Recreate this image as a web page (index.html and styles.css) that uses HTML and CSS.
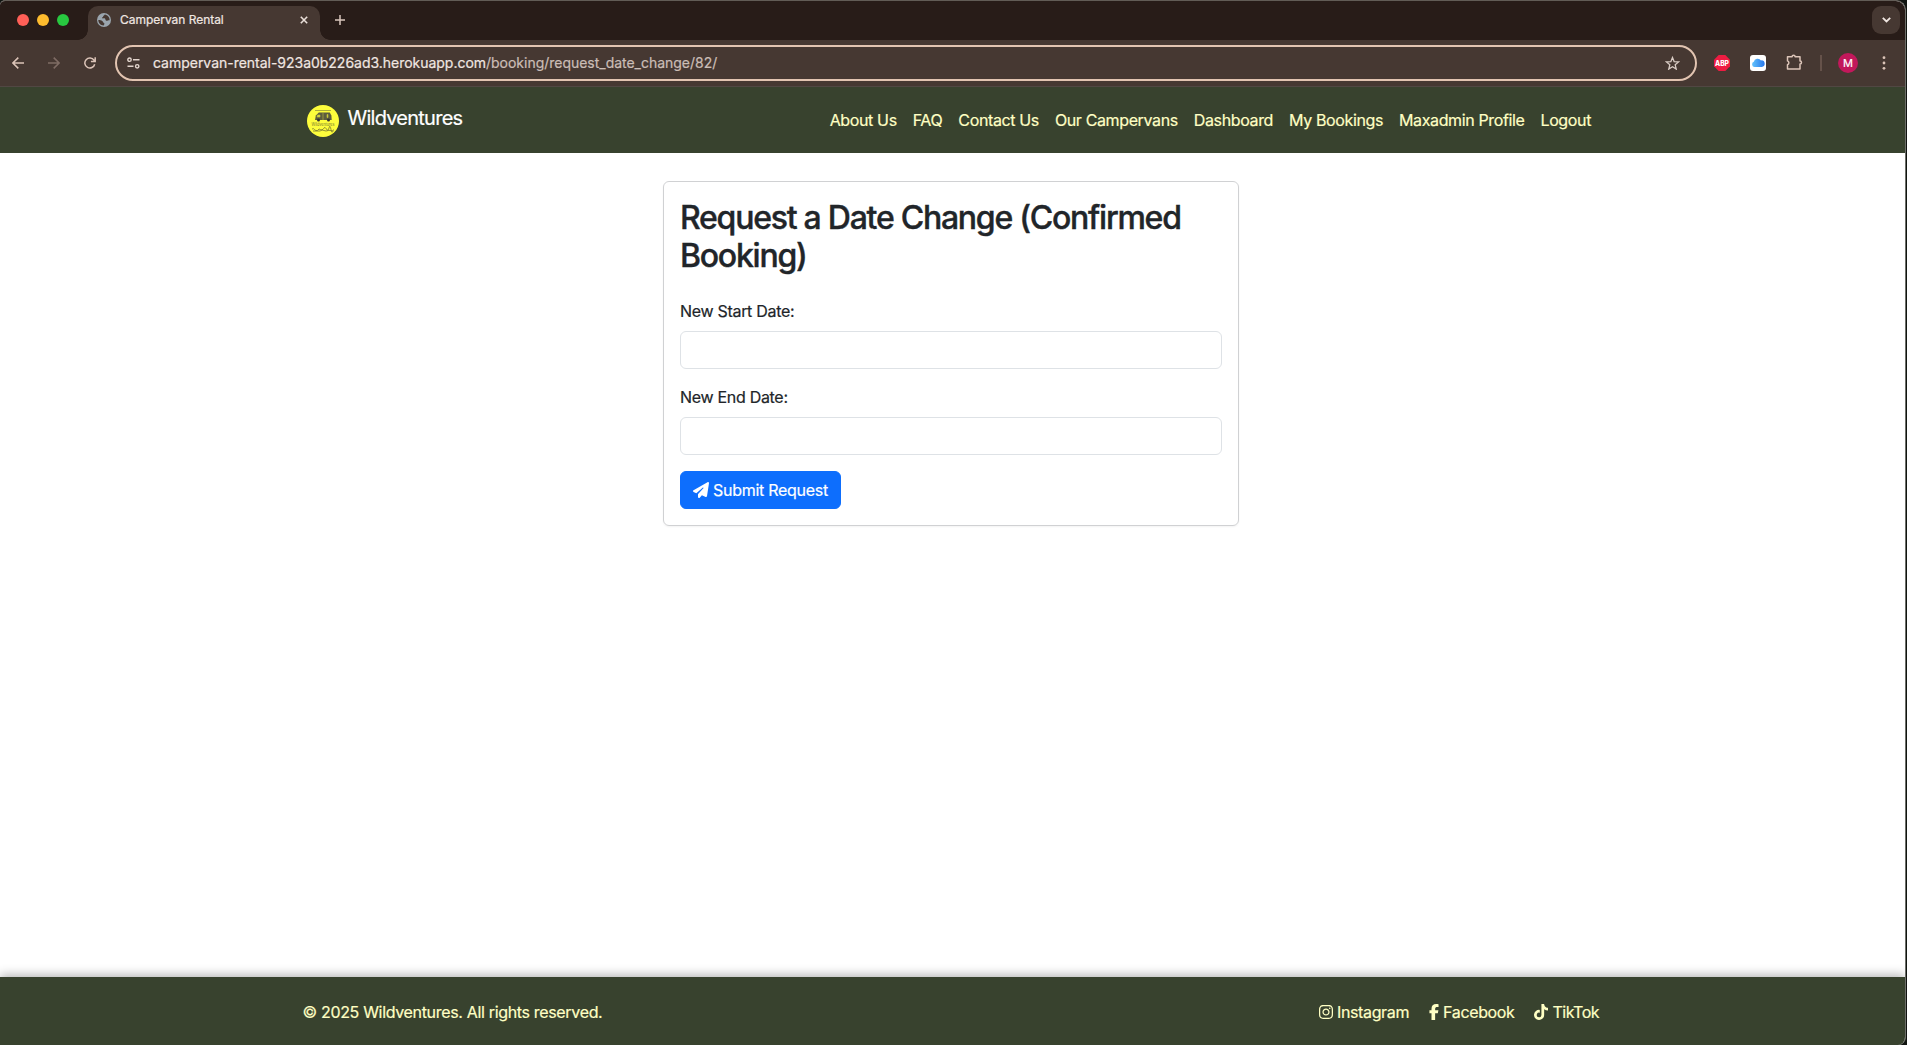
FILE: index.html
```html
<!DOCTYPE html>
<html lang="en">
<head>
<meta charset="utf-8">
<title>Campervan Rental</title>
<link rel="stylesheet" href="styles.css">
</head>
<body>
<div class="window">
  <div class="tab-strip">
    <div class="lights"><i class="red"></i><i class="amber"></i><i class="green"></i></div>
    <div class="tab">
      <svg class="globe" width="14" height="14" viewBox="0 0 14 14"><circle cx="7" cy="7" r="7" fill="#9aa5ae"/><path d="M1.3 7.1c1.7.2 2.9.1 4 .8.9.6.4 1.6 1.5 1.9 1 .3.6 1.9-.2 2.7C3.400 12.500 1.300 10 1.300 7.100zM7.800 1.600c-.3 1.100-1.500.9-1.700 2-.1.900-1 .6-1.100 1.500.8.900 2.100-.3 3 .5.8.8.1 1.900 1.300 2.200 1 .2 1.600-.5 3.300-.5.1-3-1.900-5.300-4.800-5.700z" fill="#463832"/></svg>
      <span class="tab-title">Campervan Rental</span>
      <svg class="tab-close" width="8" height="8" viewBox="0 0 8 8"><path d="M.8.8l6.400 6.400M7.200.8L.8 7.200" stroke="#eadfd9" stroke-width="1.600"/></svg>
    </div>
    <svg class="new-tab" width="10" height="10" viewBox="0 0 10 10"><path d="M5 0v10M0 5h10" stroke="#d9c6bc" stroke-width="1.500"/></svg>
    <div class="tab-search"><svg width="9" height="6" viewBox="0 0 9 6"><path d="M.8.8l3.700 3.700L8.200.8" fill="none" stroke="#f0e6e1" stroke-width="1.800"/></svg></div>
  </div>

  <div class="toolbar">
    <div class="nav-buttons">
      <svg width="12" height="12" viewBox="0 0 12 12"><path d="M12 6H1M6.300.6L.9 6l5.400 5.400" fill="none" stroke="#dcc4b8" stroke-width="1.500"/></svg>
      <svg width="12" height="12" viewBox="0 0 12 12"><path d="M0 6h11M5.700.6L11.100 6l-5.400 5.400" fill="none" stroke="#7f6c64" stroke-width="1.500"/></svg>
      <svg width="12" height="12" viewBox="0 0 12 12"><path d="M10.700 7.200A5 5 0 1 1 10 3.200L11 4.400M11.200.2v4.300H6.900" fill="none" stroke="#dcc4b8" stroke-width="1.500"/></svg>
    </div>
    <div class="address">
      <svg class="tune" width="13" height="12" viewBox="0 0 13 12"><g fill="none" stroke="#e3d5cd" stroke-width="1.400"><circle cx="2.500" cy="2.700" r="1.700"/><path d="M6 2.700h6.500M.5 9.300h6"/><circle cx="10.200" cy="9.300" r="1.700"/></g></svg>
      <span class="url">campervan-rental-923a0b226ad3.herokuapp.com<span class="path">/booking/request_date_change/82/</span></span>
      <svg class="star" width="15" height="14" viewBox="0 0 20 19"><path d="M10 2l2.200 5.600 6 .4-4.600 3.900 1.500 5.900L10 14.500l-5.100 3.300 1.500-5.900L1.800 8l6-.4z" fill="none" stroke="#d8cbc4" stroke-width="1.700"/></svg>
    </div>
    <div class="extensions">
      <svg width="16" height="16" viewBox="0 0 16 16"><path d="M4.700 0h6.600L16 4.700v6.600L11.300 16H4.700L0 11.300V4.700z" fill="#ee1c42"/><text x="8" y="10.600" text-anchor="middle" textLength="14" lengthAdjust="spacingAndGlyphs" class="abp">ABP</text></svg>
      <svg width="16" height="16" viewBox="0 0 16 16"><defs><linearGradient id="cloud" x1="0" x2="1"><stop offset="0" stop-color="#62c2fb"/><stop offset="1" stop-color="#2877ec"/></linearGradient></defs><rect width="16" height="16" rx="3" fill="#fff"/><path d="M4.500 12a2.700 2.700 0 0 1-.7-5.200A4 4 0 0 1 11 5.400a3.300 3.300 0 0 1 .7 6.600z" fill="url(#cloud)"/></svg>
      <svg width="17" height="17" viewBox="0 0 17 17"><path d="M1.500 2.700h4.600a1.500 1.500 0 0 1 3 0h4.900v4.400a1.500 1.500 0 0 1 0 3v4.900h-12.500v-4.300a2 2 0 0 0 0-3.800z" fill="none" stroke="#dcc4b8" stroke-width="1.500" stroke-linejoin="round"/></svg>
      <span class="divider"></span>
      <span class="avatar">M</span>
      <svg width="4" height="14" viewBox="0 0 4 14"><g fill="#dcc4b8"><circle cx="2" cy="1.700" r="1.400"/><circle cx="2" cy="7" r="1.400"/><circle cx="2" cy="12.300" r="1.400"/></g></svg>
    </div>
  </div>

  <header class="navbar">
    <div class="container">
      <a class="brand">
        <svg width="32" height="32" viewBox="0 0 32 32"><circle cx="16" cy="16" r="16" fill="#fdfd3c"/><path d="M8 5.500h16" stroke="#8a8a38" stroke-width=".7"/><path d="M8 15l.8-4.500 3-3h11l1.600 2.900.3 4.600H8z" fill="#5c5c3e"/><path d="M10.500 10h2.500v2h-3zM16 8v7M20 9.500h1v3h-1z" fill="#d4d43a" stroke="#c4c43a" stroke-width=".6"/><circle cx="11.500" cy="15" r="1.500" fill="#333"/><circle cx="21.500" cy="15" r="1.500" fill="#333"/><text x="16" y="21.200" text-anchor="middle" textLength="23" lengthAdjust="spacingAndGlyphs" class="logo-text">Wildventures</text><path d="M5 24q1.500-1 2.500.5t3 1q1.500-2.500 3-1t3-1 3 .5 2.500-1 2 1.500 2.500 0M6 26h7l2-1 4 1 3-.7 4 .7" fill="none" stroke="#77772f" stroke-width=".8"/></svg>
        <span>Wildventures</span>
      </a>
      <nav class="links">
        <a>About Us</a><a>FAQ</a><a>Contact Us</a><a>Our Campervans</a><a>Dashboard</a><a>My Bookings</a><a>Maxadmin Profile</a><a>Logout</a>
      </nav>
    </div>
  </header>

  <main class="content">
    <form class="card">
      <h2>Request a Date Change (Confirmed Booking)</h2>
      <label for="start">New Start Date:</label>
      <input id="start" type="text">
      <label for="end">New End Date:</label>
      <input id="end" type="text">
      <button type="button"><svg width="16" height="16" viewBox="0 0 512 512"><path fill="currentColor" d="M498.1 5.6c10.1 7 15.4 19.1 13.5 31.2l-64 416c-1.5 9.7-7.4 18.2-16 23s-18.900 5.400-28 1.600L284 427.700l-68.500 74.100c-8.900 9.700-22.900 12.900-35.200 8.100S160 493.200 160 480V396.400c0-4 1.500-7.800 4.200-10.700L331.800 202.800c5.800-6.300 5.600-16-.4-22s-15.700-6.400-22-.7L106 360.800 17.700 316.600C7.100 311.300 .3 300.700 0 288.900s5.900-22.800 16.100-28.700l448-256c10.700-6.100 23.900-5.500 34 1.400z"/></svg><span>Submit Request</span></button>
    </form>
  </main>

  <footer class="footer">
    <div class="container">
      <p>© 2025 Wildventures. All rights reserved.</p>
      <div class="social">
        <a><svg width="14" height="16" viewBox="0 0 448 512"><path fill="currentColor" d="M224.100 141c-63.600 0-114.900 51.300-114.900 114.900s51.300 114.900 114.900 114.900S339 319.500 339 255.900 287.700 141 224.100 141zm0 189.600c-41.100 0-74.700-33.500-74.700-74.700s33.500-74.700 74.700-74.700 74.700 33.500 74.700 74.700-33.600 74.700-74.700 74.700zm146.400-194.300c0 14.900-12 26.800-26.800 26.800-14.900 0-26.800-12-26.800-26.800s12-26.800 26.800-26.800 26.800 12 26.800 26.800zm76.100 27.200c-1.700-35.900-9.900-67.700-36.200-93.900-26.200-26.200-58-34.400-93.900-36.200-37-2.100-147.900-2.100-184.900 0-35.800 1.700-67.600 9.900-93.900 36.100s-34.400 58-36.200 93.900c-2.100 37-2.100 147.900 0 184.900 1.700 35.900 9.900 67.700 36.200 93.900s58 34.400 93.900 36.200c37 2.100 147.900 2.100 184.900 0 35.900-1.700 67.700-9.900 93.900-36.200 26.200-26.200 34.400-58 36.200-93.900 2.100-37 2.100-147.800 0-184.800zM398.800 388c-7.800 19.600-22.900 34.700-42.600 42.600-29.500 11.700-99.500 9-132.100 9s-102.700 2.600-132.100-9c-19.600-7.800-34.700-22.900-42.600-42.600-11.700-29.500-9-99.500-9-132.100s-2.600-102.700 9-132.100c7.800-19.600 22.900-34.700 42.600-42.600 29.500-11.700 99.500-9 132.100-9s102.700-2.600 132.100 9c19.600 7.800 34.700 22.900 42.600 42.600 11.700 29.500 9 99.500 9 132.100s2.700 102.700-9 132.100z"/></svg><span>Instagram</span></a>
        <a><svg width="10" height="16" viewBox="0 0 320 512"><path fill="currentColor" d="M80 299.300V512H196V299.300h86.500l18-97.800H196V166.900c0-51.700 20.300-71.500 72.700-71.500c16.300 0 29.400 .4 37 1.200V7.900C291.400 4 256.400 0 236.200 0C129.300 0 80 50.500 80 159.400v42.100H14v97.800H80z"/></svg><span>Facebook</span></a>
        <a class="tiktok"><svg width="14" height="16" viewBox="0 0 448 512"><path fill="currentColor" d="M448 209.910a210.060 210.060 0 0 1-122.770-39.250V349.380A162.550 162.550 0 1 1 185 188.310V278.200a74.620 74.620 0 1 0 52.230 71.180V0l88 0a121.180 121.180 0 0 0 1.860 22.170A122.180 122.180 0 0 0 381 102.390a121.430 121.430 0 0 0 67 20.140z"/></svg><span>TikTok</span></a>
      </div>
    </div>
  </footer>
</div>
</body>
</html>
```
FILE: styles.css
```css
* { box-sizing: border-box; }
body {
  margin: 0;
  background: #101410;
  font-family: Inter, "Liberation Sans", sans-serif;
  font-size: 16px;
  line-height: 24px;
  color: #212529;
  -webkit-text-stroke: .2px;
}
svg { display: block; flex: none; }
svg text { -webkit-text-stroke: 0; }
.window {
  display: flex;
  flex-direction: column;
  width: 1906px;
  height: 1045px;
  overflow: hidden;
  border-top: 1px solid #625c56;
  border-right: 1px solid #6d6e69;
  border-radius: 5px 10px 8px 0;
  background: #fff;
}

/* Browser tabs */
.tab-strip {
  display: flex;
  height: 39px;
  padding: 5px 5px 0 17px;
  background: #281c18;
}
.lights { display: flex; gap: 8px; padding-top: 8px; width: 71px; }
.lights i { width: 12px; height: 12px; border-radius: 50%; }
.red { background: #ff5f57; }
.amber { background: #febc2e; }
.green { background: #28c840; }
.tab {
  position: relative;
  display: flex;
  align-items: center;
  width: 232px;
  height: 34px;
  padding: 0 12px 6px 9px;
  border-radius: 10px 10px 0 0;
  background: #463832;
}
.tab::before, .tab::after {
  content: "";
  position: absolute;
  bottom: 0;
  width: 10px;
  height: 10px;
}
.tab::before { left: -10px; background: radial-gradient(circle at 0 0, transparent 9.5px, #463832 10px); }
.tab::after { right: -10px; background: radial-gradient(circle at 100% 0, transparent 9.5px, #463832 10px); }
.tab-title { flex: 1; margin-left: 9px; font-size: 12px; line-height: 16px; letter-spacing: -.03px; color: #f0e6e1; }
.new-tab { margin: 9px 0 0 15px; }
.tab-search {
  display: grid;
  place-items: center;
  width: 28px;
  height: 28px;
  margin-left: auto;
  border-radius: 9px;
  background: #463832;
}

/* Browser toolbar */
.toolbar {
  display: flex;
  align-items: center;
  height: 47px;
  padding: 0 19px 1px 12px;
  border-bottom: 1px solid #514743;
  background: #463832;
}
.nav-buttons { display: flex; gap: 24px; width: 103px; }
.address {
  display: flex;
  align-items: center;
  width: 1582px;
  height: 36px;
  padding: 0 15.5px 0 10px;
  border: 2px solid #e2c4b1;
  border-radius: 18px;
}
.url { flex: 1; margin-left: 13px; font-size: 14px; line-height: 20px; letter-spacing: -.02px; color: #f0e6e1; }
.path { color: #cbbdb6; }
.extensions { display: flex; align-items: center; margin-left: 17px; }
.extensions > svg:nth-child(2) { margin-left: 20px; }
.extensions > svg:nth-child(3) { margin-left: 20px; }
.abp { font-size: 7px; font-weight: 800; fill: #fff; }
.divider { width: 2px; height: 16px; margin: 0 16px 0 17px; background: #65524a; }
.avatar {
  width: 20px;
  height: 20px;
  margin-right: 24px;
  border-radius: 50%;
  background: #c2185b;
  color: #fff;
  font-size: 11px;
  line-height: 20px;
  text-align: center;
}

/* Site navigation */
.container {
  display: flex;
  justify-content: space-between;
  align-items: center;
  width: 1320px;
  margin: 0 auto;
  padding: 0 12px;
}
.navbar, .footer { padding-right: 3px; background: #38422e; color: #ffffc4; }
.navbar { height: 66px; padding-top: 1px; }
.navbar .container { height: 65px; padding-right: 20px; }
.brand {
  display: flex;
  gap: 8.5px;
  padding-left: 4px;
  color: #fff;
  font-size: 20px;
  line-height: 26px;
  letter-spacing: -0.75px;
}
.logo-text { font-size: 4.500px; letter-spacing: 0; fill: #77772f; }
.links { display: flex; gap: 16px; padding-bottom: 2px; letter-spacing: -0.37px; }

/* Date change form */
.content { flex: 1; padding: 28px 3px 0 0; }
.card {
  display: flex;
  flex-direction: column;
  align-items: flex-start;
  width: 576px;
  margin: 0 auto;
  padding: 16px;
  border: 1px solid #d0d1d3;
  border-radius: 6px;
  box-shadow: 0 1px 2px rgba(0, 0, 0, .05);
}
h2 {
  margin: 0 0 23px;
  padding-top: 1px;
  font-size: 32px;
  font-weight: 500;
  line-height: 38.4px;
  letter-spacing: -1.25px;
  -webkit-text-stroke: .4px;
}
label { margin-bottom: 8px; letter-spacing: -0.3px; }
input {
  width: 100%;
  height: 38px;
  margin: 0 0 16px;
  padding: 6px 12px;
  border: 1px solid #dee2e6;
  border-radius: 6px;
  background: #fff;
}
button {
  display: flex;
  align-items: center;
  gap: 4px;
  width: 161px;
  height: 38px;
  padding: 0 12px;
  border: 1px solid #0d6efd;
  border-radius: 6px;
  background: #0d6efd;
  color: #fff;
  font: inherit;
  letter-spacing: -0.28px;
  white-space: nowrap;
}

/* Site footer */
.footer {
  display: flex;
  align-items: center;
  height: 68px;
  padding-top: 2px;
  box-shadow: 0 -2px 10px rgba(0, 0, 0, .3);
}
.footer p { margin: 0 0 0 -.5px; letter-spacing: -0.33px; }
.social { display: flex; gap: 20px; letter-spacing: -0.36px; }
.social a { display: flex; align-items: center; gap: 4px; }
.tiktok { letter-spacing: -0.5px; }
```
